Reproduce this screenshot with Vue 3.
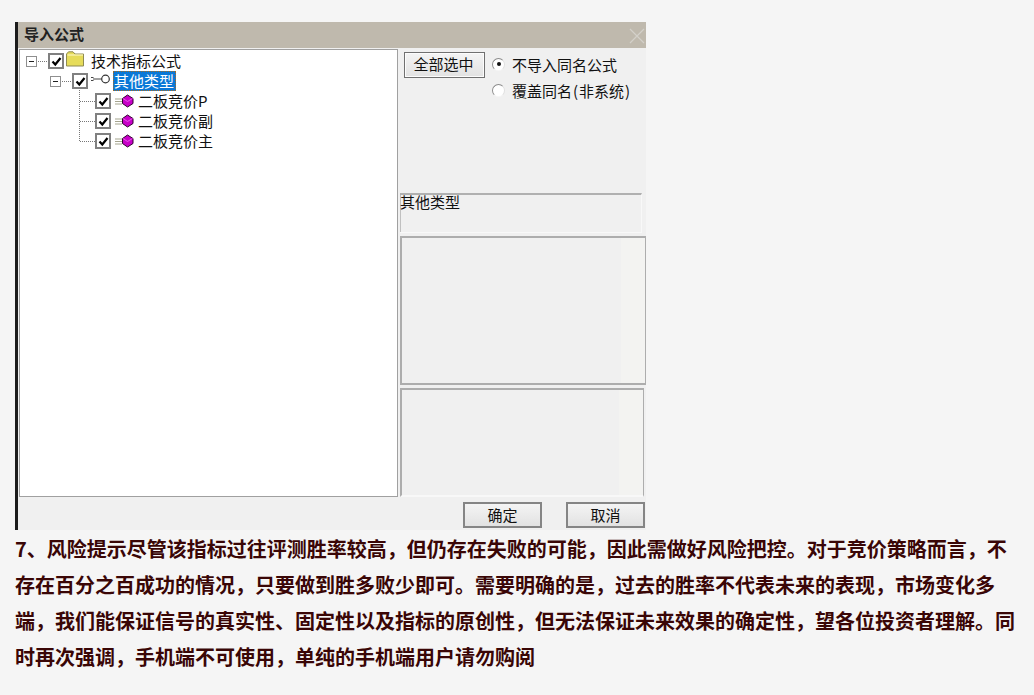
<script setup>
const leaves = ['二板竞价P', '二板竞价副', '二板竞价主']
</script>

<template>
  <div class="page">
    <div class="dialog">
      <div class="titlebar">
        <span class="title">导入公式</span>
        <svg class="close" width="16" height="16" viewBox="0 0 16 16"><path d="M1 1L15 15M15 1L1 15" stroke="#d3d0c9" stroke-width="1.2" fill="none" /></svg>
      </div>
      <div class="body">
        <div class="tree">
          <div class="row row-root">
            <span class="exp"><i class="minus"></i></span>
            <span class="dots short"></span>
            <span class="check"><svg width="11" height="11" viewBox="0 0 11 11"><path d="M1.500 5.500L4.300 8.500L9.500 2" stroke="#000" stroke-width="2.200" fill="none" /></svg></span>
            <svg class="folder" width="18" height="16" viewBox="0 0 18 16"><path d="M0.500 15V3L2.500 0.800H7L9 3H17.500V15Z" fill="#e6dc5a" stroke="#8f8b52" /><path d="M1.500 4H17" stroke="#fffbd0" /></svg>
            <span class="label root-label">技术指标公式</span>
          </div>
          <div class="row row-type">
            <span class="exp"><i class="minus"></i></span>
            <span class="dots short"></span>
            <span class="check"><svg width="11" height="11" viewBox="0 0 11 11"><path d="M1.500 5.500L4.300 8.500L9.500 2" stroke="#000" stroke-width="2.200" fill="none" /></svg></span>
            <svg class="key" width="20" height="12" viewBox="0 0 20 12"><path d="M1 4.500H3.500M1 7.500H3.500M3 6H12" stroke="#444" stroke-width="1.200" fill="none" /><circle cx="15.500" cy="6" r="3.800" fill="#fff" stroke="#333" stroke-width="1.200" /></svg>
            <span class="label selected">其他类型</span>
          </div>
          <div class="leaves">
            <div v-for="leaf in leaves" :key="leaf" class="row leaf">
              <span class="dots long"></span>
              <span class="check"><svg width="11" height="11" viewBox="0 0 11 11"><path d="M1.500 5.500L4.300 8.500L9.500 2" stroke="#000" stroke-width="2.200" fill="none" /></svg></span>
              <svg class="gem" width="20" height="14" viewBox="0 0 20 14"><path d="M1 5H8M1 7.500H8M1 10H8" stroke="#a5a58f" stroke-width="1" fill="none" /><path d="M13.500 1L19 4.500V9.500L13.500 13L8.500 9.500V4.500Z" fill="#c800c8" stroke="#30002f" stroke-width="1" /><path d="M9 4.500L13.500 7.500L18.500 4.500" fill="none" stroke="#f070f0" stroke-width="0.800" /></svg>
              <span class="label">{{ leaf }}</span>
            </div>
          </div>
        </div>
        <div class="side">
          <div class="options">
            <button class="btn select-all">全部选中</button>
            <div class="radios">
              <div class="radio-row"><span class="radio on"></span><span>不导入同名公式</span></div>
              <div class="radio-row"><span class="radio"></span><span>覆盖同名<span class="paren">(</span>非系统<span class="paren">)</span></span></div>
            </div>
          </div>
          <div class="name-box">其他类型</div>
          <div class="panel panel-a"></div>
          <div class="panel panel-b"></div>
        </div>
      </div>
      <div class="footer">
        <button class="btn action">确定</button>
        <button class="btn action">取消</button>
      </div>
    </div>
    <p class="note">7、风险提示尽管该指标过往评测胜率较高，但仍存在失败的可能，因此需做好风险把控。对于竞价策略而言，不存在百分之百成功的情况，只要做到胜多败少即可。需要明确的是，过去的胜率不代表未来的表现，市场变化多端，我们能保证信号的真实性、固定性以及指标的原创性，但无法保证未来效果的确定性，望各位投资者理解。同时再次强调，手机端不可使用，单纯的手机端用户请勿购阅</p>
  </div>
</template>

<style scoped>
.page {
  box-sizing: border-box;
  height: 695px;
  padding: 22px 15px 0;
  background: #f5f5f5;
  font-family: "Noto Sans CJK SC", "Liberation Sans", sans-serif;
  overflow: hidden;
}
.dialog {
  box-sizing: border-box;
  width: 631px;
  height: 508px;
  border-left: 3px solid #1c1c1c;
  background: #f0f0f0;
  color: #111;
  font-size: 15px;
}
.titlebar {
  height: 26px;
  background: #bfb9ad;
  display: flex;
  align-items: center;
  justify-content: space-between;
  padding: 0 1px 0 6px;
}
.title {
  font-size: 15px;
  line-height: 20px;
  margin-top: -2px;
  font-weight: 700;
  color: #222;
}
.close { margin-top: 1px; }
.body {
  display: flex;
  height: 448px;
  margin-top: 1px;
}
.tree {
  box-sizing: border-box;
  width: 379px;
  margin-left: 1px;
  border: 1px solid #a0a0a0;
  background: #fff;
  padding: 1px 0 0 6px;
}
.row {
  height: 20px;
  display: flex;
  align-items: center;
}
.row-type { padding-left: 24px; }
.leaves {
  margin-left: 53px;
  border-left: 1px dotted #777;
  height: 50px;
  margin-top: -1px;
  padding-top: 1px;
}
.leaf .dots { width: 15px; }
.exp {
  box-sizing: border-box;
  width: 11px;
  height: 11px;
  border: 1px solid #8f8f8f;
  background: #fff;
  display: flex;
  align-items: center;
  justify-content: center;
}
.minus {
  width: 5px;
  height: 1px;
  background: #222;
}
.dots {
  height: 0;
  border-top: 1px dotted #777;
}
.short { width: 9px; margin: 0 1px; }
.check {
  box-sizing: border-box;
  width: 16px;
  height: 16px;
  border: 2px solid #808080;
  background: #fff;
  display: flex;
  align-items: center;
  justify-content: center;
}
.folder { margin-left: 2px; margin-top: -4px; }
.key { margin-left: 2px; margin-top: -4px; }
.gem { margin-left: 3px; }
.label {
  margin-left: 4px;
  line-height: 20px;
  white-space: nowrap;
}
.root-label { margin-left: 7px; }
.selected {
  margin-left: 3px;
  background: #0a78d7;
  color: #fff;
  padding: 0 2px 0 1px;
  height: 20px;
  line-height: 19px;
  outline: 1px dotted #a86a20;
  outline-offset: -1px;
}
.side {
  flex: 1;
  display: flex;
  flex-direction: column;
  min-width: 0;
  padding-left: 2px;
}
.options {
  box-sizing: border-box;
  height: 144px;
  display: flex;
  padding: 3px 0 0 4px;
}
.btn {
  box-sizing: border-box;
  font: inherit;
  line-height: 22px;
  color: #111;
  padding: 0 0 2px;
  border: 1px solid #707070;
  background: linear-gradient(#f4f4f4, #e2e2e2);
  border-radius: 0;
}
.select-all {
  width: 81px;
  height: 26px;
  padding-right: 2px;
  box-shadow: inset 0 0 0 1px #fcfcfc;
}
.radios { margin-left: 7px; margin-top: -1px; }
.radio-row {
  height: 26px;
  display: flex;
  align-items: center;
  gap: 7px;
  white-space: nowrap;
}
.paren { padding: 0 1px; }
.radio {
  box-sizing: border-box;
  width: 13px;
  height: 13px;
  border-radius: 50%;
  border: 1px solid;
  border-color: #8c8c8c #e0e0e0 #f6f6f6 #8c8c8c;
  background: #fff;
  display: flex;
  align-items: center;
  justify-content: center;
}
.radio.on::after {
  content: "";
  width: 4px;
  height: 4px;
  border-radius: 50%;
  background: #111;
}
.name-box {
  box-sizing: border-box;
  width: 242px;
  height: 40px;
  border-top: 2px solid #b0b0b0;
  border-left: 0;
  background: #f0f0f0;
  line-height: 14px;
  border-right: 1px solid #f8f8f8;
  border-bottom: 1px solid #f8f8f8;
  box-shadow: inset 1px 0 0 #c0c0c0;
}
.panel {
  box-sizing: border-box;
  border: 2px solid #adadad;
  border-right-width: 1px;
  background: linear-gradient(90deg, #f0f0f0 90%, #f3f3f1 90%);
}
.panel-a {
  width: 246px;
  height: 149px;
  margin-top: 3px;
}
.panel-b {
  width: 244px;
  height: 109px;
  margin-top: 3px;
  border-bottom-color: #f8f8f8;
}
.footer {
  display: flex;
  justify-content: flex-end;
  gap: 24px;
  padding: 5px 1px 0 0;
}
.action {
  width: 79px;
  height: 26px;
  border: 2px solid #858585;
}
.note {
  margin: 1px 0 0;
  font-size: 20px;
  font-weight: 700;
  line-height: 36px;
  color: #3a0606;
  word-break: break-all;
}
</style>
